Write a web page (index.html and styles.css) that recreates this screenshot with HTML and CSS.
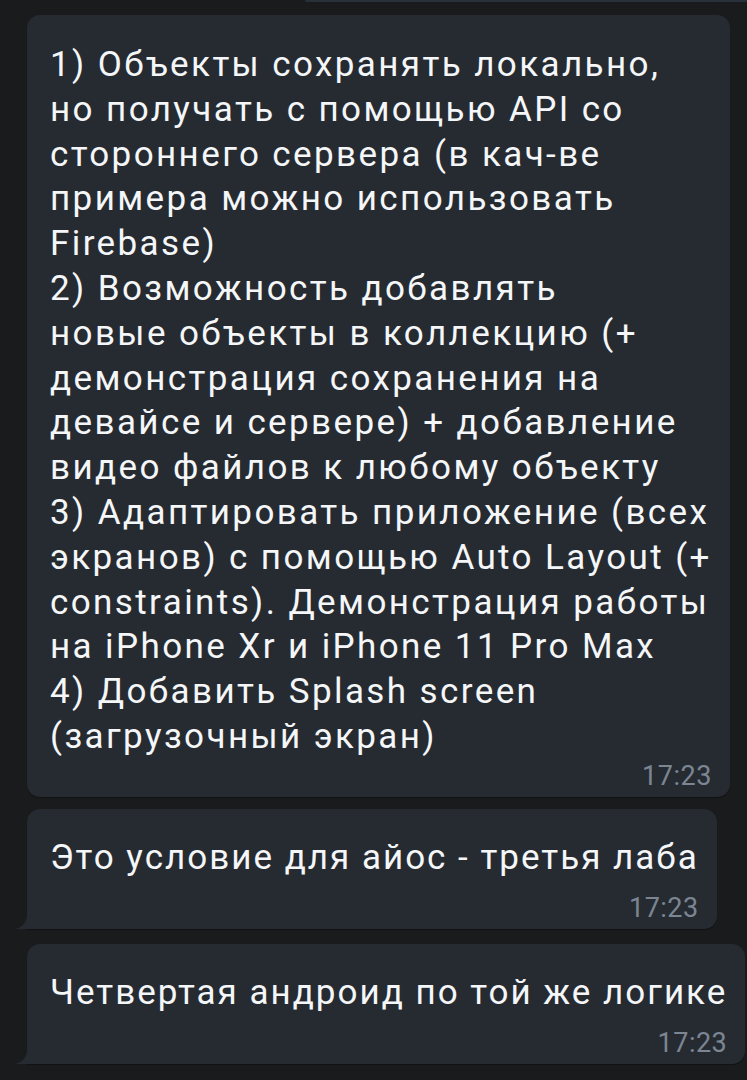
FILE: index.html
```html
<!DOCTYPE html>
<html lang="ru">
<head>
<meta charset="utf-8">
<title>Чат</title>
<link rel="stylesheet" href="styles.css">
</head>
<body>
<div class="chat">
  <div class="prev-bubble"></div>
  <div class="bubble bubble-long">
    <div class="text">1) Объекты сохранять локально,<br>но получать с помощью API со<br>стороннего сервера (в кач-ве<br>примера можно использовать<br>Firebase)<br>2) Возможность добавлять<br>новые объекты в коллекцию (+<br>демонстрация сохранения на<br>девайсе и сервере) + добавление<br>видео файлов к любому объекту<br>3) Адаптировать приложение (всех<br>экранов) с помощью Auto Layout (+<br>constraints). Демонстрация работы<br>на iPhone Xr и iPhone 11 Pro Max<br>4) Добавить Splash screen<br>(загрузочный экран)</div>
    <div class="time time-first">17:23</div>
  </div>
  <div class="bubble tail">
    <div class="text">Это условие для айос - третья лаба</div>
    <div class="time time-second">17:23</div>
  </div>
  <div class="bubble tail last">
    <div class="text">Четвертая андроид по той же логике</div>
    <div class="time time-third">17:23</div>
  </div>
</div>
</body>
</html>
```
FILE: styles.css
```css
html, body {
  margin: 0;
  padding: 0;
  background: #1a1b1d;
}
body {
  width: 747px;
  height: 1080px;
  overflow: hidden;
  font-family: Roboto, "Noto Sans", sans-serif;
}
.chat {
  display: flex;
  flex-direction: column;
  align-items: flex-start;
  gap: 12px;
}
.prev-bubble {
  align-self: flex-end;
  width: 442px;
  height: 2px;
  background: #28313a;
  border-bottom-left-radius: 2px;
  margin-bottom: 1px;
}
.bubble {
  position: relative;
  margin-left: 27px;
  padding: 26px 18px 7px 23px;
  background: #262b32;
  border-radius: 13px;
  box-shadow: 0 1px 1px rgba(0, 0, 0, 0.35);
}
.bubble.last {
  margin-top: 3px;
}
.text {
  color: #f4f6f8;
  font-size: 35px;
  line-height: 45px;
  letter-spacing: 2px;
  white-space: nowrap;
}
.bubble-long {
  padding-top: 28px;
}
.bubble-long .text {
  letter-spacing: 2.4px;
  line-height: 44.8px;
}
.time {
  text-align: right;
  color: #7b8692;
  font-size: 27px;
  line-height: 28px;
  letter-spacing: 0.5px;
}
.time-first {
  margin-top: 2px;
}
.time-second {
  margin-top: 14px;
}
.time-third {
  margin-top: 14px;
}
.bubble.tail {
  border-bottom-left-radius: 0;
}
.bubble.tail::before {
  content: "";
  position: absolute;
  left: -14px;
  bottom: 0;
  width: 14px;
  height: 14px;
  background: radial-gradient(circle at 0 0, transparent 13.5px, #262b32 14.5px);
}
```
